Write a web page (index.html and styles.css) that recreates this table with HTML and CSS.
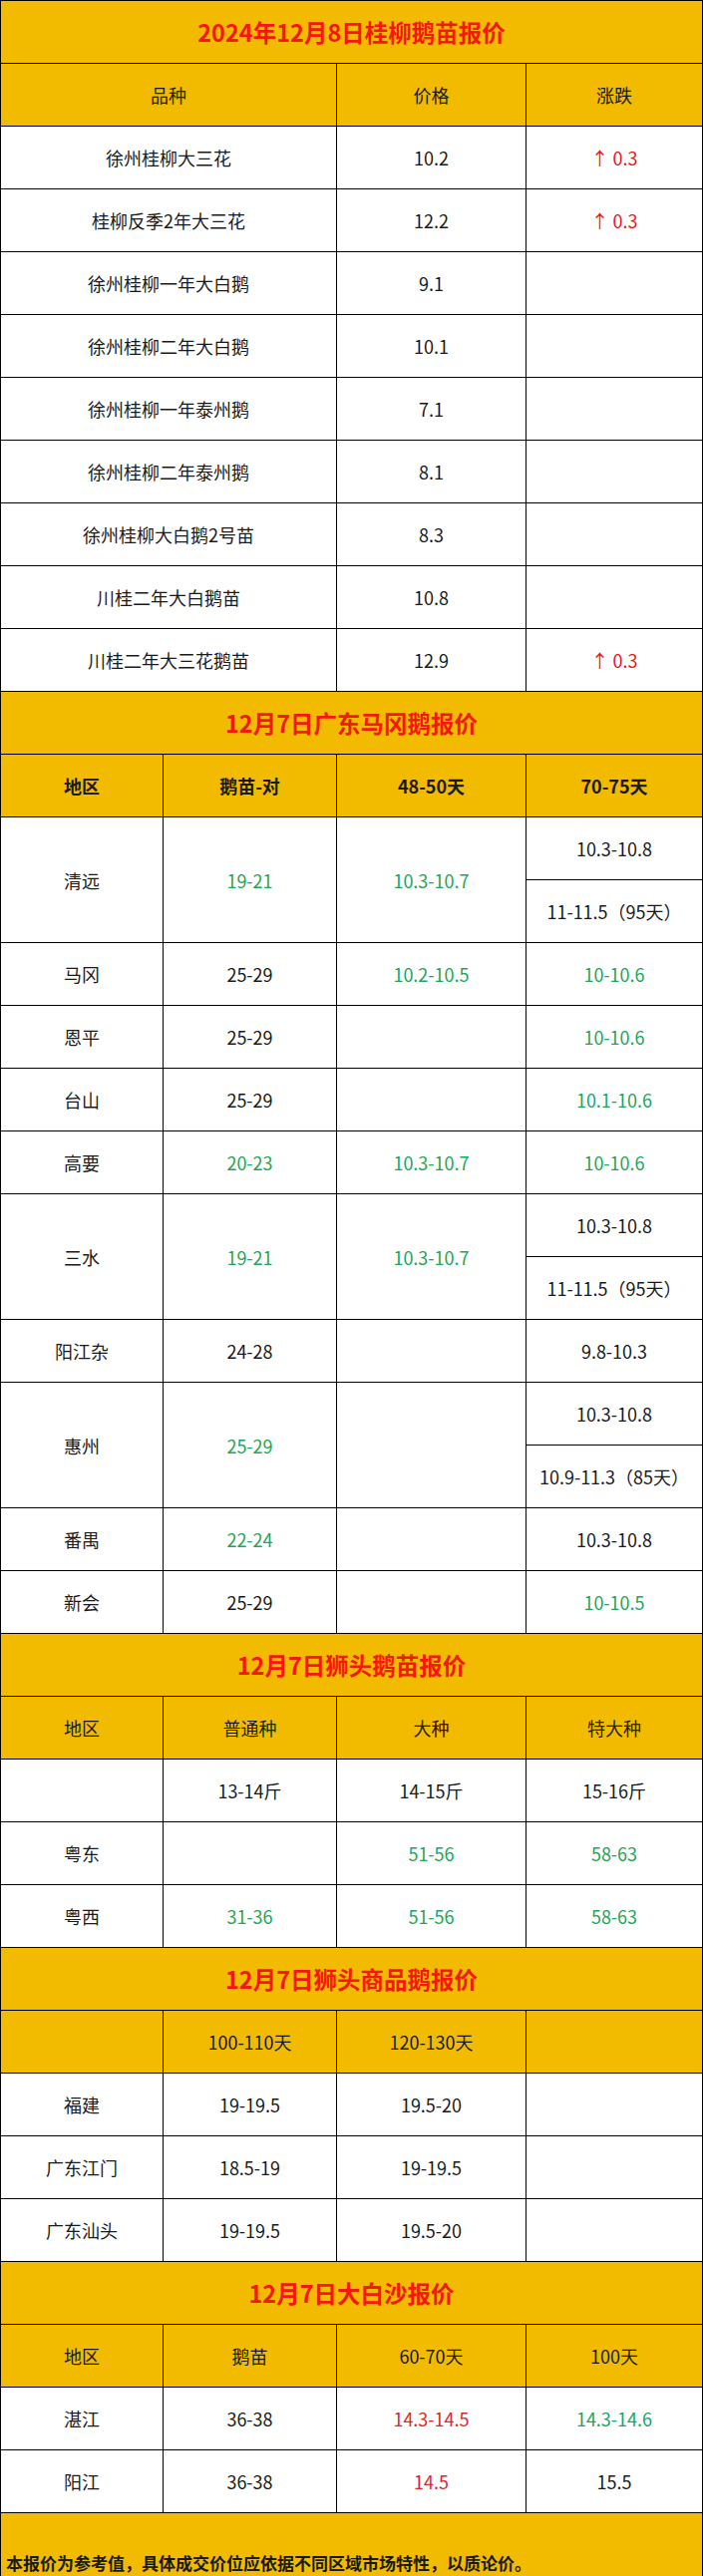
FILE: index.html
```html
<!DOCTYPE html>
<html lang="zh-CN">
<head>
<meta charset="utf-8">
<title>鹅苗报价</title>
<link rel="stylesheet" href="styles.css">
</head>
<body>
<table class="quote">
  <colgroup><col class="c1"><col class="c2"><col class="c3"><col class="c4"></colgroup>
  <tbody>
    <tr class="title"><td colspan="4">2024年12月8日桂柳鹅苗报价</td></tr>
    <tr class="head"><td colspan="2">品种</td><td>价格</td><td>涨跌</td></tr>
    <tr><td colspan="2">徐州桂柳大三花</td><td>10.2</td><td class="up">↑ 0.3</td></tr>
    <tr><td colspan="2">桂柳反季2年大三花</td><td>12.2</td><td class="up">↑ 0.3</td></tr>
    <tr><td colspan="2">徐州桂柳一年大白鹅</td><td>9.1</td><td></td></tr>
    <tr><td colspan="2">徐州桂柳二年大白鹅</td><td>10.1</td><td></td></tr>
    <tr><td colspan="2">徐州桂柳一年泰州鹅</td><td>7.1</td><td></td></tr>
    <tr><td colspan="2">徐州桂柳二年泰州鹅</td><td>8.1</td><td></td></tr>
    <tr><td colspan="2">徐州桂柳大白鹅2号苗</td><td>8.3</td><td></td></tr>
    <tr><td colspan="2">川桂二年大白鹅苗</td><td>10.8</td><td></td></tr>
    <tr><td colspan="2">川桂二年大三花鹅苗</td><td>12.9</td><td class="up">↑ 0.3</td></tr>

    <tr class="title"><td colspan="4">12月7日广东马冈鹅报价</td></tr>
    <tr class="head bold"><td>地区</td><td>鹅苗-对</td><td>48-50天</td><td>70-75天</td></tr>
    <tr><td rowspan="2">清远</td><td rowspan="2" class="g">19-21</td><td rowspan="2" class="g">10.3-10.7</td><td>10.3-10.8</td></tr>
    <tr><td>11-11.5（95天）</td></tr>
    <tr><td>马冈</td><td>25-29</td><td class="g">10.2-10.5</td><td class="g">10-10.6</td></tr>
    <tr><td>恩平</td><td>25-29</td><td></td><td class="g">10-10.6</td></tr>
    <tr><td>台山</td><td>25-29</td><td></td><td class="g">10.1-10.6</td></tr>
    <tr><td>高要</td><td class="g">20-23</td><td class="g">10.3-10.7</td><td class="g">10-10.6</td></tr>
    <tr><td rowspan="2">三水</td><td rowspan="2" class="g">19-21</td><td rowspan="2" class="g">10.3-10.7</td><td>10.3-10.8</td></tr>
    <tr><td>11-11.5（95天）</td></tr>
    <tr><td>阳江杂</td><td>24-28</td><td></td><td>9.8-10.3</td></tr>
    <tr><td rowspan="2">惠州</td><td rowspan="2" class="g">25-29</td><td rowspan="2"></td><td>10.3-10.8</td></tr>
    <tr><td>10.9-11.3（85天）</td></tr>
    <tr><td>番禺</td><td class="g">22-24</td><td></td><td>10.3-10.8</td></tr>
    <tr><td>新会</td><td>25-29</td><td></td><td class="g">10-10.5</td></tr>

    <tr class="title"><td colspan="4">12月7日狮头鹅苗报价</td></tr>
    <tr class="head"><td>地区</td><td>普通种</td><td>大种</td><td>特大种</td></tr>
    <tr><td></td><td>13-14斤</td><td>14-15斤</td><td>15-16斤</td></tr>
    <tr><td>粤东</td><td></td><td class="g">51-56</td><td class="g">58-63</td></tr>
    <tr><td>粤西</td><td class="g">31-36</td><td class="g">51-56</td><td class="g">58-63</td></tr>

    <tr class="title"><td colspan="4">12月7日狮头商品鹅报价</td></tr>
    <tr class="head"><td></td><td>100-110天</td><td>120-130天</td><td></td></tr>
    <tr><td>福建</td><td>19-19.5</td><td>19.5-20</td><td></td></tr>
    <tr><td>广东江门</td><td>18.5-19</td><td>19-19.5</td><td></td></tr>
    <tr><td>广东汕头</td><td>19-19.5</td><td>19.5-20</td><td></td></tr>

    <tr class="title"><td colspan="4">12月7日大白沙报价</td></tr>
    <tr class="head"><td>地区</td><td>鹅苗</td><td>60-70天</td><td>100天</td></tr>
    <tr><td>湛江</td><td>36-38</td><td class="r">14.3-14.5</td><td class="g">14.3-14.6</td></tr>
    <tr><td>阳江</td><td>36-38</td><td class="r">14.5</td><td>15.5</td></tr>

    <tr class="foot"><td colspan="4">本报价为参考值，具体成交价位应依据不同区域市场特性，以质论价。</td></tr>
  </tbody>
</table>
</body>
</html>
```

FILE: styles.css
```css
html, body {
  margin: 0;
  padding: 0;
  background: #ffffff;
}

.quote {
  width: 704px;
  table-layout: fixed;
  border-collapse: collapse;
  font-family: "Noto Sans CJK SC", "Noto Sans", sans-serif;
  font-size: 18px;
  color: #1a1a1a;
}

.c1 { width: 163px; }
.c2 { width: 174px; }
.c3 { width: 190px; }
.c4 { width: 177px; }

.quote td {
  border: 1px solid #000;
  height: 62px;
  padding: 0;
  text-align: center;
  vertical-align: middle;
  line-height: 22px;
  white-space: nowrap;
}

.quote .title td {
  background: #f2bb00;
  color: #f5180f;
  font-weight: 700;
  font-size: 23.5px;
}

.quote .head td {
  background: #f2bb00;
}

.quote .head.bold td {
  font-weight: 700;
}

.quote td.g { color: #21a55a; }
.quote td.r { color: #e0262b; }
.quote td.up { color: #e8161b; }

.quote .foot td {
  background: #f2bb00;
  text-align: left;
  vertical-align: bottom;
  font-weight: 700;
  font-size: 17px;
  padding: 0 0 3px 5px;
  height: 60px;
  line-height: 20px;
}
```
